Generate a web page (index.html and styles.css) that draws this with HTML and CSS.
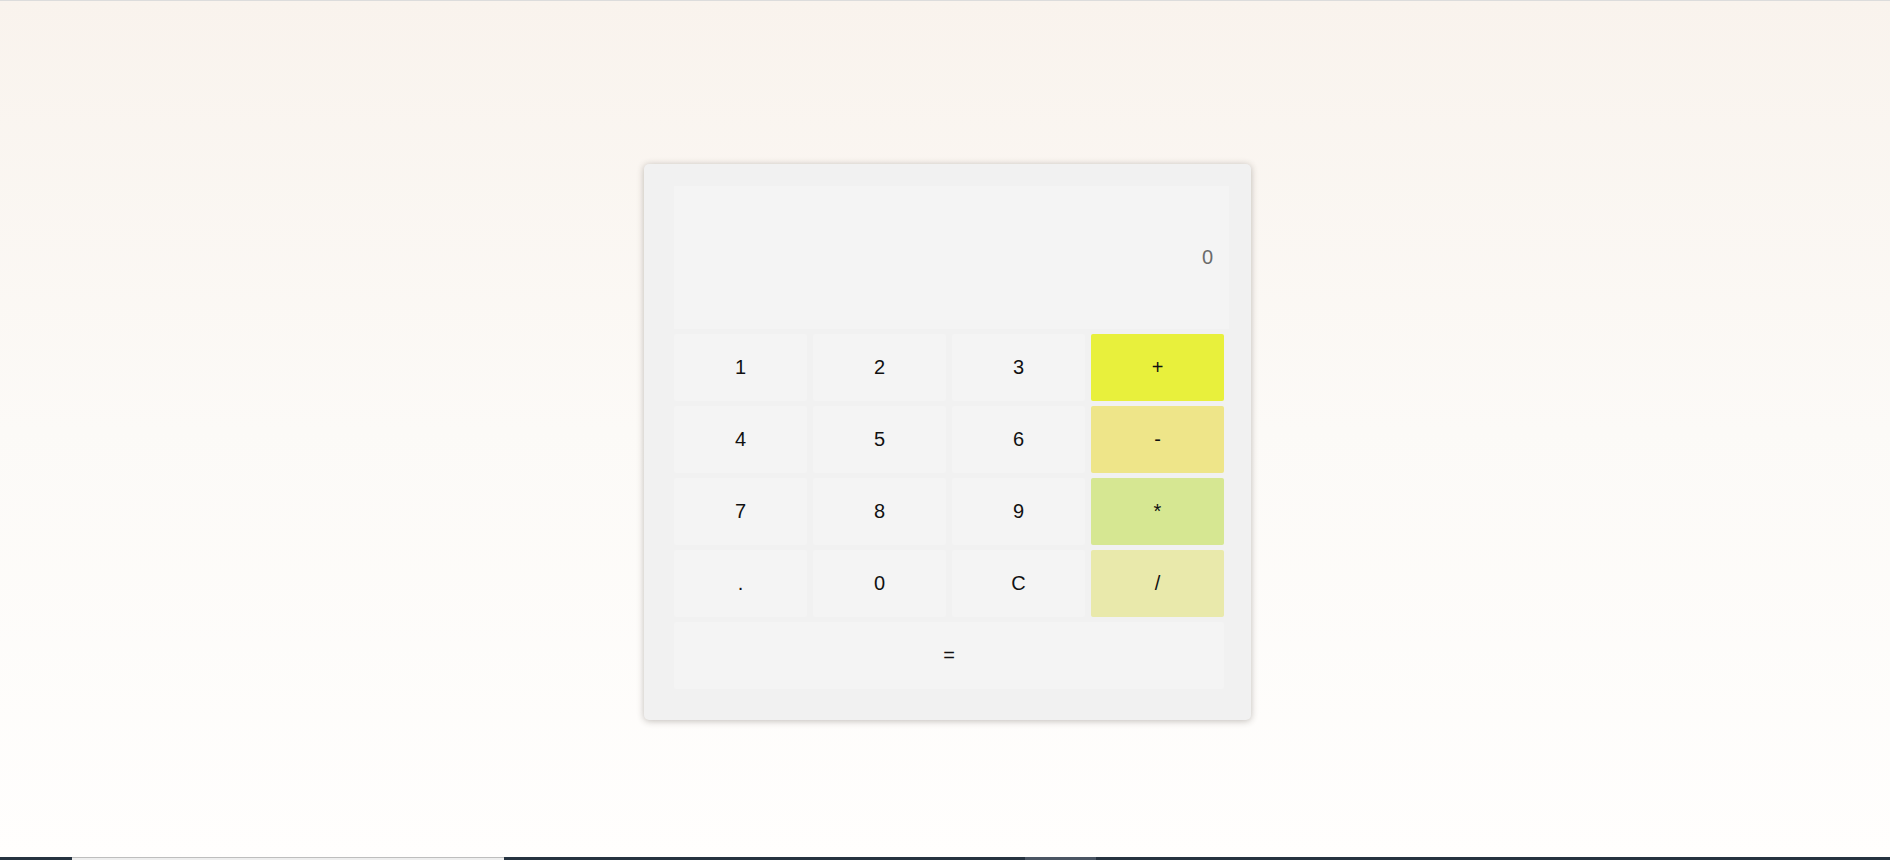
FILE: index.html
```html
<!DOCTYPE html>
<html lang="en">
<head>
<meta charset="utf-8">
<title>Calculator</title>
<link rel="stylesheet" href="styles.css">
</head>
<body>
<div class="topline"></div>
<main class="stage">
  <div class="calc">
    <div class="display">0</div>
    <div class="keys">
      <button class="key">1</button>
      <button class="key">2</button>
      <button class="key">3</button>
      <button class="key op-plus">+</button>
      <button class="key">4</button>
      <button class="key">5</button>
      <button class="key">6</button>
      <button class="key op-minus">-</button>
      <button class="key">7</button>
      <button class="key">8</button>
      <button class="key">9</button>
      <button class="key op-mul">*</button>
      <button class="key">.</button>
      <button class="key">0</button>
      <button class="key">C</button>
      <button class="key op-div">/</button>
      <button class="key equals">=</button>
    </div>
  </div>
</main>
<div class="bottombar">
  <div class="seg-dark seg-a"></div>
  <div class="seg-light"></div>
  <div class="seg-dark seg-b"></div>
  <div class="seg-grey"></div>
  <div class="seg-dark seg-c"></div>
</div>
</body>
</html>
```
FILE: styles.css
```css
* { box-sizing: border-box; }
html, body { margin: 0; padding: 0; }
body {
  width: 1890px;
  height: 860px;
  display: flex;
  flex-direction: column;
  font-family: "Liberation Sans", Arial, sans-serif;
  background: linear-gradient(to bottom, #f9f3ed 0%, #fcfaf7 50%, #fffefd 100%);
  overflow: hidden;
}
.topline { height: 1px; background: #dcdcdc; flex: none; }
.stage {
  flex: 1;
  display: flex;
  justify-content: center;
  align-items: flex-start;
  padding-top: 163px;
  padding-left: 5px;
}
.calc {
  width: 607px;
  background: #f1f1f1;
  border-radius: 5px;
  padding: 22px 22px 31px 30px;
  box-shadow: 0 1px 7px rgba(60, 50, 40, 0.32);
}
.display {
  width: 555px;
  height: 143px;
  background: #f4f4f4;
  display: flex;
  align-items: center;
  justify-content: flex-end;
  padding-right: 16px;
  font-size: 20px;
  color: #6b6b6b;
  margin-bottom: 5px;
}
.keys {
  display: grid;
  grid-template-columns: repeat(4, 133px);
  grid-auto-rows: 67px;
  column-gap: 6px;
  row-gap: 5px;
}
.key {
  border: none;
  border-radius: 2px;
  background: #f4f4f4;
  font-family: "Liberation Sans", Arial, sans-serif;
  font-size: 20px;
  color: #111;
  padding: 0;
  margin: 0;
}
.op-plus { background: #e8f03c; }
.op-minus { background: #eee589; }
.op-mul { background: #d6e792; }
.op-div { background: #e9e9ab; }
.equals { grid-column: 1 / span 4; }
.bottombar {
  height: 3px;
  flex: none;
  display: flex;
}
.seg-dark { background: #263340; }
.seg-a { width: 72px; }
.seg-light { width: 432px; background: #eeeeee; border-top: 1px solid #bdbdbd; }
.seg-b { width: 521px; }
.seg-grey { width: 71px; background: #4a5563; }
.seg-c { flex: 1; }
```
